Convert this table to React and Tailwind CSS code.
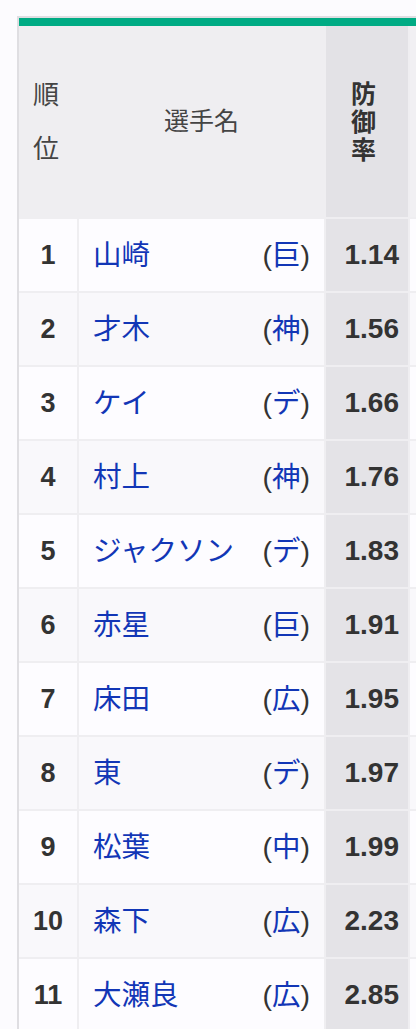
import React from 'react'

const rows = [
  {rank: 1, name: '山崎', team: '巨', era: '1.14'},
  {rank: 2, name: '才木', team: '神', era: '1.56'},
  {rank: 3, name: 'ケイ', team: 'デ', era: '1.66'},
  {rank: 4, name: '村上', team: '神', era: '1.76'},
  {rank: 5, name: 'ジャクソン', team: 'デ', era: '1.83'},
  {rank: 6, name: '赤星', team: '巨', era: '1.91'},
  {rank: 7, name: '床田', team: '広', era: '1.95'},
  {rank: 8, name: '東', team: 'デ', era: '1.97'},
  {rank: 9, name: '松葉', team: '中', era: '1.99'},
  {rank: 10, name: '森下', team: '広', era: '2.23'},
  {rank: 11, name: '大瀬良', team: '広', era: '2.85'},
]

const App = () => {
  return (
    <div className="min-h-screen bg-[#fcfbfe] pt-[16px] pl-[17px] overflow-hidden font-['Liberation_Sans','Noto_Sans_CJK_JP',sans-serif] text-[#333]">
      <div className="border-l-2 border-t-2 border-[#dfdee2] w-[420px]">
        <div className="h-[8px] bg-[#00ab84]"/>
        <div className="grid grid-cols-[58px_245px_82px_1fr] gap-[2px] bg-[#efeef1]">
          <div className="h-[191px] bg-[#efeef1] flex flex-col items-center justify-center text-[26px] leading-[54px] text-[#444] pr-[4px]">
            <span>順</span>
            <span>位</span>
          </div>
          <div className="bg-[#efeef1] flex items-center justify-center text-[25px] text-[#444]">選手名</div>
          <div className="bg-[#e3e2e6] flex flex-col items-center justify-center text-[25px] leading-[28px] font-bold text-[#333] pr-[7px]">
            <span>防</span>
            <span>御</span>
            <span>率</span>
          </div>
          <div className="bg-[#f1f0f3]"/>
          {rows.map((r, i) => {
            const bg = i % 2 === 0 ? 'bg-[#fdfcff]' : 'bg-[#f9f8fb]'
            return (
              <React.Fragment key={r.rank}>
                <div className={`h-[72px] ${bg} flex items-center justify-center text-[27px] font-bold`}>{r.rank}</div>
                <div className={`${bg} flex items-center justify-between pl-[14px] pr-[14px] text-[28.5px]`}>
                  <span className="text-[#1236b6]">{r.name}</span>
                  <span>(<span className="text-[#1236b6]">{r.team}</span>)</span>
                </div>
                <div className="bg-[#e4e3e7] flex items-center justify-end pr-[9px] text-[28px] font-bold">{r.era}</div>
                <div className={bg}/>
              </React.Fragment>
            )
          })}
        </div>
      </div>
    </div>
  )
}

export default App
